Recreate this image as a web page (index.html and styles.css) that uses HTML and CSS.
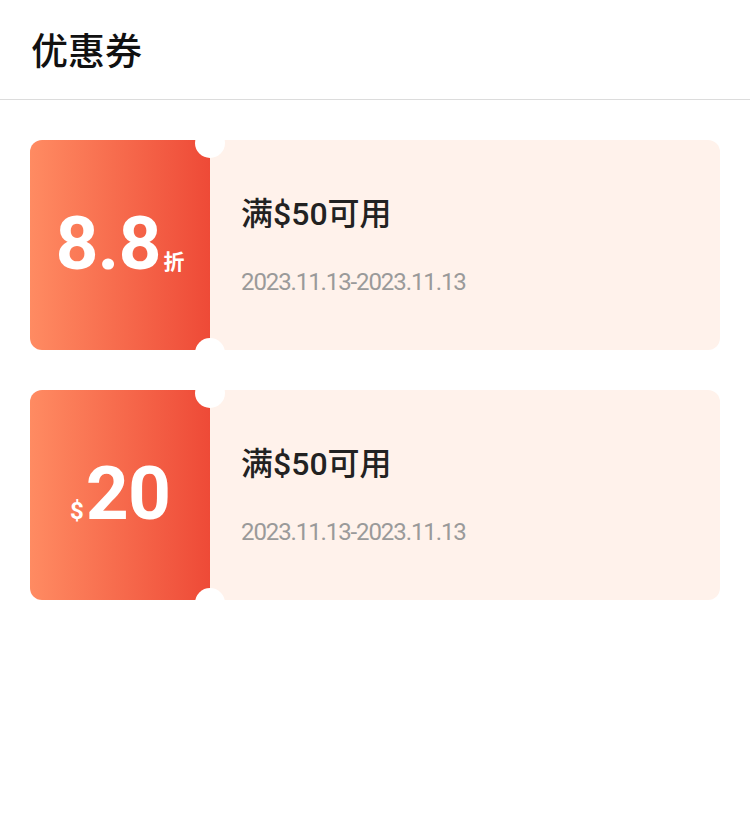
FILE: index.html
```html
<!DOCTYPE html>
<html lang="zh">
<head>
<meta charset="utf-8">
<link rel="stylesheet" href="styles.css">
</head>
<body>
<header class="header"><h1 class="title">优惠券</h1></header>
<main class="list">
  <div class="coupon">
    <div class="value"><span class="num">8.8</span><span class="unit">折</span></div>
    <div class="info">
      <div class="cond">满$50可用</div>
      <div class="date">2023.11.13-2023.11.13</div>
    </div>
    <span class="notch notch-top"></span>
    <span class="notch notch-bottom"></span>
  </div>
  <div class="coupon">
    <div class="value"><span class="cur">$</span><span class="num">20</span></div>
    <div class="info">
      <div class="cond">满$50可用</div>
      <div class="date">2023.11.13-2023.11.13</div>
    </div>
    <span class="notch notch-top"></span>
    <span class="notch notch-bottom"></span>
  </div>
</main>
</body>
</html>
```
FILE: styles.css
```css
* { box-sizing: border-box; }
html, body { margin: 0; padding: 0; background: #fff; }
body { font-family: Roboto, "Noto Sans CJK SC", sans-serif; color: #222; }
.header {
  height: 100px;
  border-bottom: 1px solid #dcdcdc;
  display: flex;
  align-items: center;
  padding-left: 31px;
}
.title {
  margin: 0;
  font-family: "Noto Sans CJK SC", sans-serif;
  font-size: 37px;
  font-weight: 500;
  color: #111;
  line-height: 1;
}
.list {
  padding: 40px 30px;
  display: flex;
  flex-direction: column;
  gap: 40px;
}
.coupon {
  position: relative;
  display: flex;
  height: 210px;
}
.value {
  width: 180px;
  border-radius: 12px 0 0 12px;
  background: linear-gradient(90deg, #ff8b62 0%, #ee4a37 100%);
  color: #fff;
  display: flex;
  align-items: baseline;
  justify-content: center;
  padding-top: 66px;
}
.num {
  font-family: Roboto, sans-serif;
  font-size: 75px;
  font-weight: 700;
  line-height: 1;
  letter-spacing: -1px;
}
.unit {
  font-family: "Noto Sans CJK SC", sans-serif;
  font-size: 21px;
  font-weight: 700;
  margin-left: 3px;
}
.cur {
  font-family: Roboto, sans-serif;
  font-size: 24px;
  font-weight: 700;
  margin-right: 2px;
}
.info {
  flex: 1;
  background: #fff2eb;
  border-radius: 0 12px 12px 0;
  padding: 52px 0 0 31px;
}
.cond {
  font-family: Roboto, "Noto Sans CJK SC", sans-serif;
  font-size: 32px;
  font-weight: 500;
  color: #222;
  line-height: 44px;
}
.date {
  margin-top: 29px;
  font-family: Roboto, sans-serif;
  font-size: 24px;
  color: #9a9a9a;
  line-height: 34px;
  letter-spacing: -1.1px;
}
.notch {
  position: absolute;
  left: 165px;
  width: 30px;
  height: 30px;
  border-radius: 50%;
  background: #fff;
}
.notch-top { top: -12px; }
.notch-bottom { bottom: -18px; }
```
